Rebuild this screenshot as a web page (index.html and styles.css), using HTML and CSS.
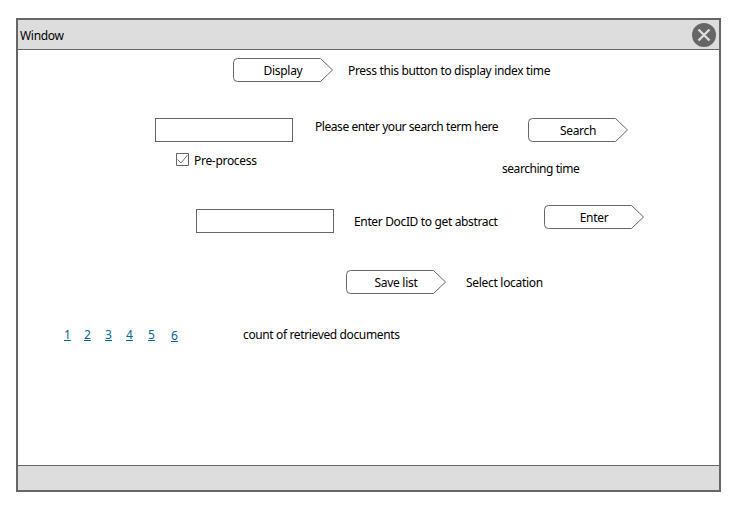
FILE: index.html
```
<!DOCTYPE html>
<html lang="en">
<head>
<meta charset="utf-8">
<title>Window</title>
<link rel="stylesheet" href="styles.css">
</head>
<body>
<svg class="defs" aria-hidden="true">
  <symbol id="arrow" viewBox="0 0 100 24"><path d="M4.5.5H87.5L99.5 12L87.5 23.5H4.5Q.5 23.5 .5 19.5V4.5Q.5.5 4.5.5Z" fill="#fff" stroke="#666"/></symbol>
</svg>
<main class="window">
  <header class="titlebar">
    <span class="title">Window</span>
    <svg class="close" viewBox="0 0 24 24"><circle cx="12" cy="12" r="12" fill="#666"/><path d="M6.5 6.5L17.5 17.5M17.5 6.5L6.5 17.5" stroke="#ddd" stroke-width="2.4"/></svg>
  </header>
  <section class="content">
    <div class="row display-row">
      <button class="arrow-button"><svg><use href="#arrow"/></svg><span>Display</span></button>
      <span class="t-press">Press this button to display index time</span>
    </div>
    <div class="row search-row">
      <input class="field" type="text" aria-label="Search term">
      <span class="search-label">Please enter your search term here</span>
      <button class="arrow-button"><svg><use href="#arrow"/></svg><span>Search</span></button>
    </div>
    <div class="row option-row">
      <label class="check"><svg viewBox="0 0 13 13"><path d="M.5.5H12.5V12.5H.5Z" fill="#fff" stroke="#666"/><path d="M1.5 6.5L5 10L11.5 2" fill="none" stroke="#777"/></svg><span class="t-pre">Pre-process</span></label>
      <span class="t-time">searching time</span>
    </div>
    <div class="row doc-row">
      <input class="field" type="text" aria-label="DocID">
      <span class="doc-label">Enter DocID to get abstract</span>
      <button class="arrow-button"><svg><use href="#arrow"/></svg><span>Enter</span></button>
    </div>
    <div class="row save-row">
      <button class="arrow-button"><svg><use href="#arrow"/></svg><span>Save list</span></button>
      <span class="t-select">Select location</span>
    </div>
    <div class="row result-row">
      <nav class="pages"><a href="#">1</a><a href="#">2</a><a href="#">3</a><a href="#">4</a><a href="#">5</a><a href="#">6</a></nav>
      <span class="t-count">count of retrieved documents</span>
    </div>
  </section>
  <footer class="statusbar"></footer>
</main>
</body>
</html>
```
FILE: styles.css
```
* { box-sizing: border-box; }
body {
  margin: 0;
  padding: 18px 0 0 16px;
  background: #fff;
  color: #000;
  font: 12px/16px "Noto Sans", "Open Sans", sans-serif;
  letter-spacing: -0.3px;
  white-space: nowrap;
}
.defs { display: none; }
.window {
  display: flex;
  flex-direction: column;
  width: 705px;
  height: 474px;
  border: 2px solid #666;
}
.titlebar {
  display: flex;
  align-items: center;
  justify-content: space-between;
  height: 30px;
  padding: 0 3px 0 2px;
  background: #ddd;
  border-bottom: 1px solid #666;
}
.title { padding-top: 3px; }
.close { width: 24px; height: 24px; margin-top: 1px; }
.content { flex: 1; }
.statusbar { height: 25px; background: #ddd; border-top: 1px solid #666; }
.row { display: flex; align-items: center; height: 24px; }
.display-row { margin: 8px 0 0 215px; gap: 15px; }
.search-row { margin: 36px 0 0 137px; }
.option-row { margin: 8px 0 0 158px; height: 22px; }
.doc-row { margin: 33px 0 0 178px; height: 28px; }
.save-row { margin: 37px 0 0 328px; gap: 20px; }
.result-row { margin: 29px 0 0 46px; }
.field {
  width: 138px;
  height: 24px;
  margin: 0;
  padding: 0 4px;
  border: 1px solid #666;
  background: #fff;
  font: inherit;
}
.arrow-button {
  display: grid;
  place-items: center;
  width: 100px;
  height: 24px;
  padding: 0;
  border: 0;
  background: none;
  font: inherit;
  color: inherit;
  letter-spacing: inherit;
}
.arrow-button > * { grid-area: 1 / 1; }
.arrow-button svg { width: 100px; height: 24px; }
.arrow-button span { padding-top: 2px; }
.t-press { padding-top: 2px; letter-spacing: -0.33px; }
.t-select { padding-top: 2px; }
.search-label { width: 213px; margin-left: 22px; padding-bottom: 6px; letter-spacing: -0.44px; }
.check { display: flex; align-items: center; gap: 5px; width: 326px; height: 22px; }
.check svg { width: 13px; height: 13px; margin-bottom: 3px; }
.t-pre { padding-bottom: 1px; }
.t-time { padding-top: 15px; letter-spacing: -0.45px; }
.doc-row .field { align-self: flex-end; }
.doc-label { width: 190px; margin-left: 20px; padding-top: 5px; letter-spacing: -0.35px; }
.doc-row .arrow-button { align-self: flex-start; }
.pages { display: flex; width: 179px; letter-spacing: 0; }
.pages a { width: 21px; color: #069; text-decoration: underline; }
.pages a:first-child { width: 20px; }
.pages a:nth-child(4) { width: 22px; }
.pages a:nth-child(5) { width: 23px; }
.pages a:nth-child(6) { padding-top: 1px; }
.t-count { letter-spacing: -0.37px; }
```
